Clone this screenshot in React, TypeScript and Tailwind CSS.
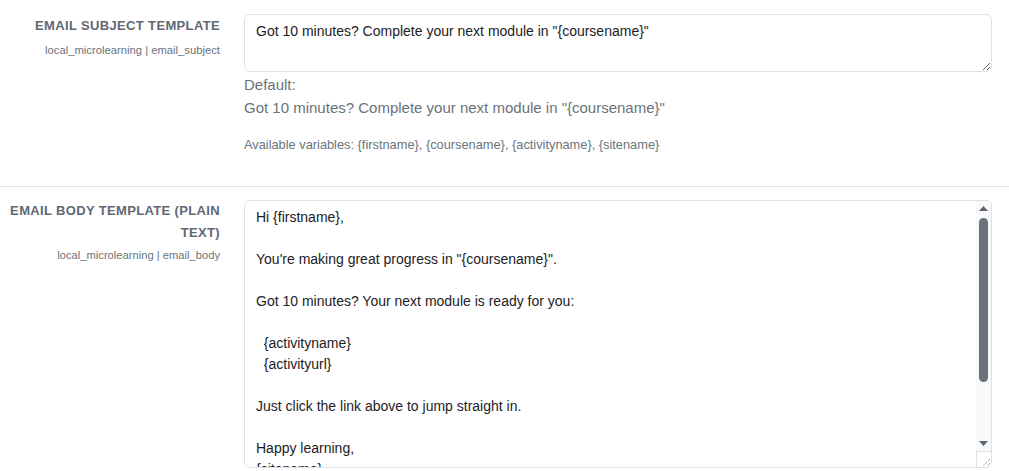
import React from "react";

const font = { fontFamily: '"Liberation Sans", Arial, sans-serif' };

const body = `Hi {firstname},

You're making great progress in "{coursename}".

Got 10 minutes? Your next module is ready for you:

  {activityname}
  {activityurl}

Just click the link above to jump straight in.

Happy learning,
{sitename}`;

function FakeScrollbar() {
  return (
    <div className="w-[15px] shrink-0 flex flex-col bg-[#f8f9fa]">
      <div className="h-[15px] flex items-center justify-center">
        <svg width="9" height="5" viewBox="0 0 9 5"><polygon points="4.5,0 9,5 0,5" fill="#5f656b" /></svg>
      </div>
      <div className="flex-1 px-[3px] pt-[2px]">
        <div className="h-[164px] rounded-full bg-[#6c737b]" />
      </div>
      <div className="h-[15px] flex items-center justify-center">
        <svg width="9" height="5" viewBox="0 0 9 5"><polygon points="0,0 9,0 4.5,5" fill="#5f656b" /></svg>
      </div>
      <div className="h-[16px] border-t border-l border-[#dee2e6] bg-white flex items-end justify-end">
        <svg width="11" height="11" viewBox="0 0 11 11">
          <line x1="10" y1="3" x2="3" y2="10" stroke="#7a7a7a" strokeWidth="1" strokeDasharray="1 1" />
          <line x1="10" y1="7" x2="7" y2="10" stroke="#7a7a7a" strokeWidth="1" strokeDasharray="1 1" />
        </svg>
      </div>
    </div>
  );
}

export default function App() {
  return (
    <div className="w-[1009px] h-[471px] overflow-hidden bg-white" style={font}>
      <div className="flex pt-[14px] pb-[32px] border-b border-[#dee2e6]">
        <div className="w-[244px] shrink-0 pr-[24px] text-right">
          <div className="mt-[1px] text-[13px] font-bold uppercase tracking-[0.35px] text-[#5f6873] leading-[22px]">Email subject template</div>
          <div className="mt-[5px] text-[11.25px] text-[#6a737b] leading-[16px]">local_microlearning | email_subject</div>
        </div>
        <div className="flex-1 pr-[17px]">
          <textarea
            readOnly
            defaultValue={'Got 10 minutes? Complete your next module in "{coursename}"'}
            className="block w-full h-[58px] border border-[#dee2e6] rounded-[6px] px-[11px] py-[6px] text-[14px] leading-[21px] text-[#1d2125] resize-y outline-none"
          />
          <div className="mt-[2px] text-[15px] leading-[22px] text-[#6a737b]">Default:</div>
          <div className="mt-[1px] text-[15px] leading-[22px] text-[#6a737b]">Got 10 minutes? Complete your next module in "{'{coursename}'}"</div>
          <div className="mt-[17px] text-[12.8px] leading-[18px] text-[#6a737b]">Available variables: {'{firstname}'}, {'{coursename}'}, {'{activityname}'}, {'{sitename}'}</div>
        </div>
      </div>
      <div className="flex pt-[13px]">
        <div className="w-[244px] shrink-0 pr-[24px] text-right">
          <div className="text-[13px] font-bold uppercase tracking-[0.35px] text-[#5f6873] leading-[22px]">Email body template (plain text)</div>
          <div className="mt-[3px] text-[11.2px] text-[#6a737b] leading-[16px]">local_microlearning | email_body</div>
        </div>
        <div className="flex-1 pr-[17px]">
          <div className="flex h-[268px] border border-[#dee2e6] rounded-[6px] overflow-hidden">
            <div className="flex-1 overflow-hidden px-[11px] py-[6px] whitespace-pre text-[14px] leading-[21px] text-[#1d2125]">{body}</div>
            <FakeScrollbar />
          </div>
        </div>
      </div>
    </div>
  );
}
